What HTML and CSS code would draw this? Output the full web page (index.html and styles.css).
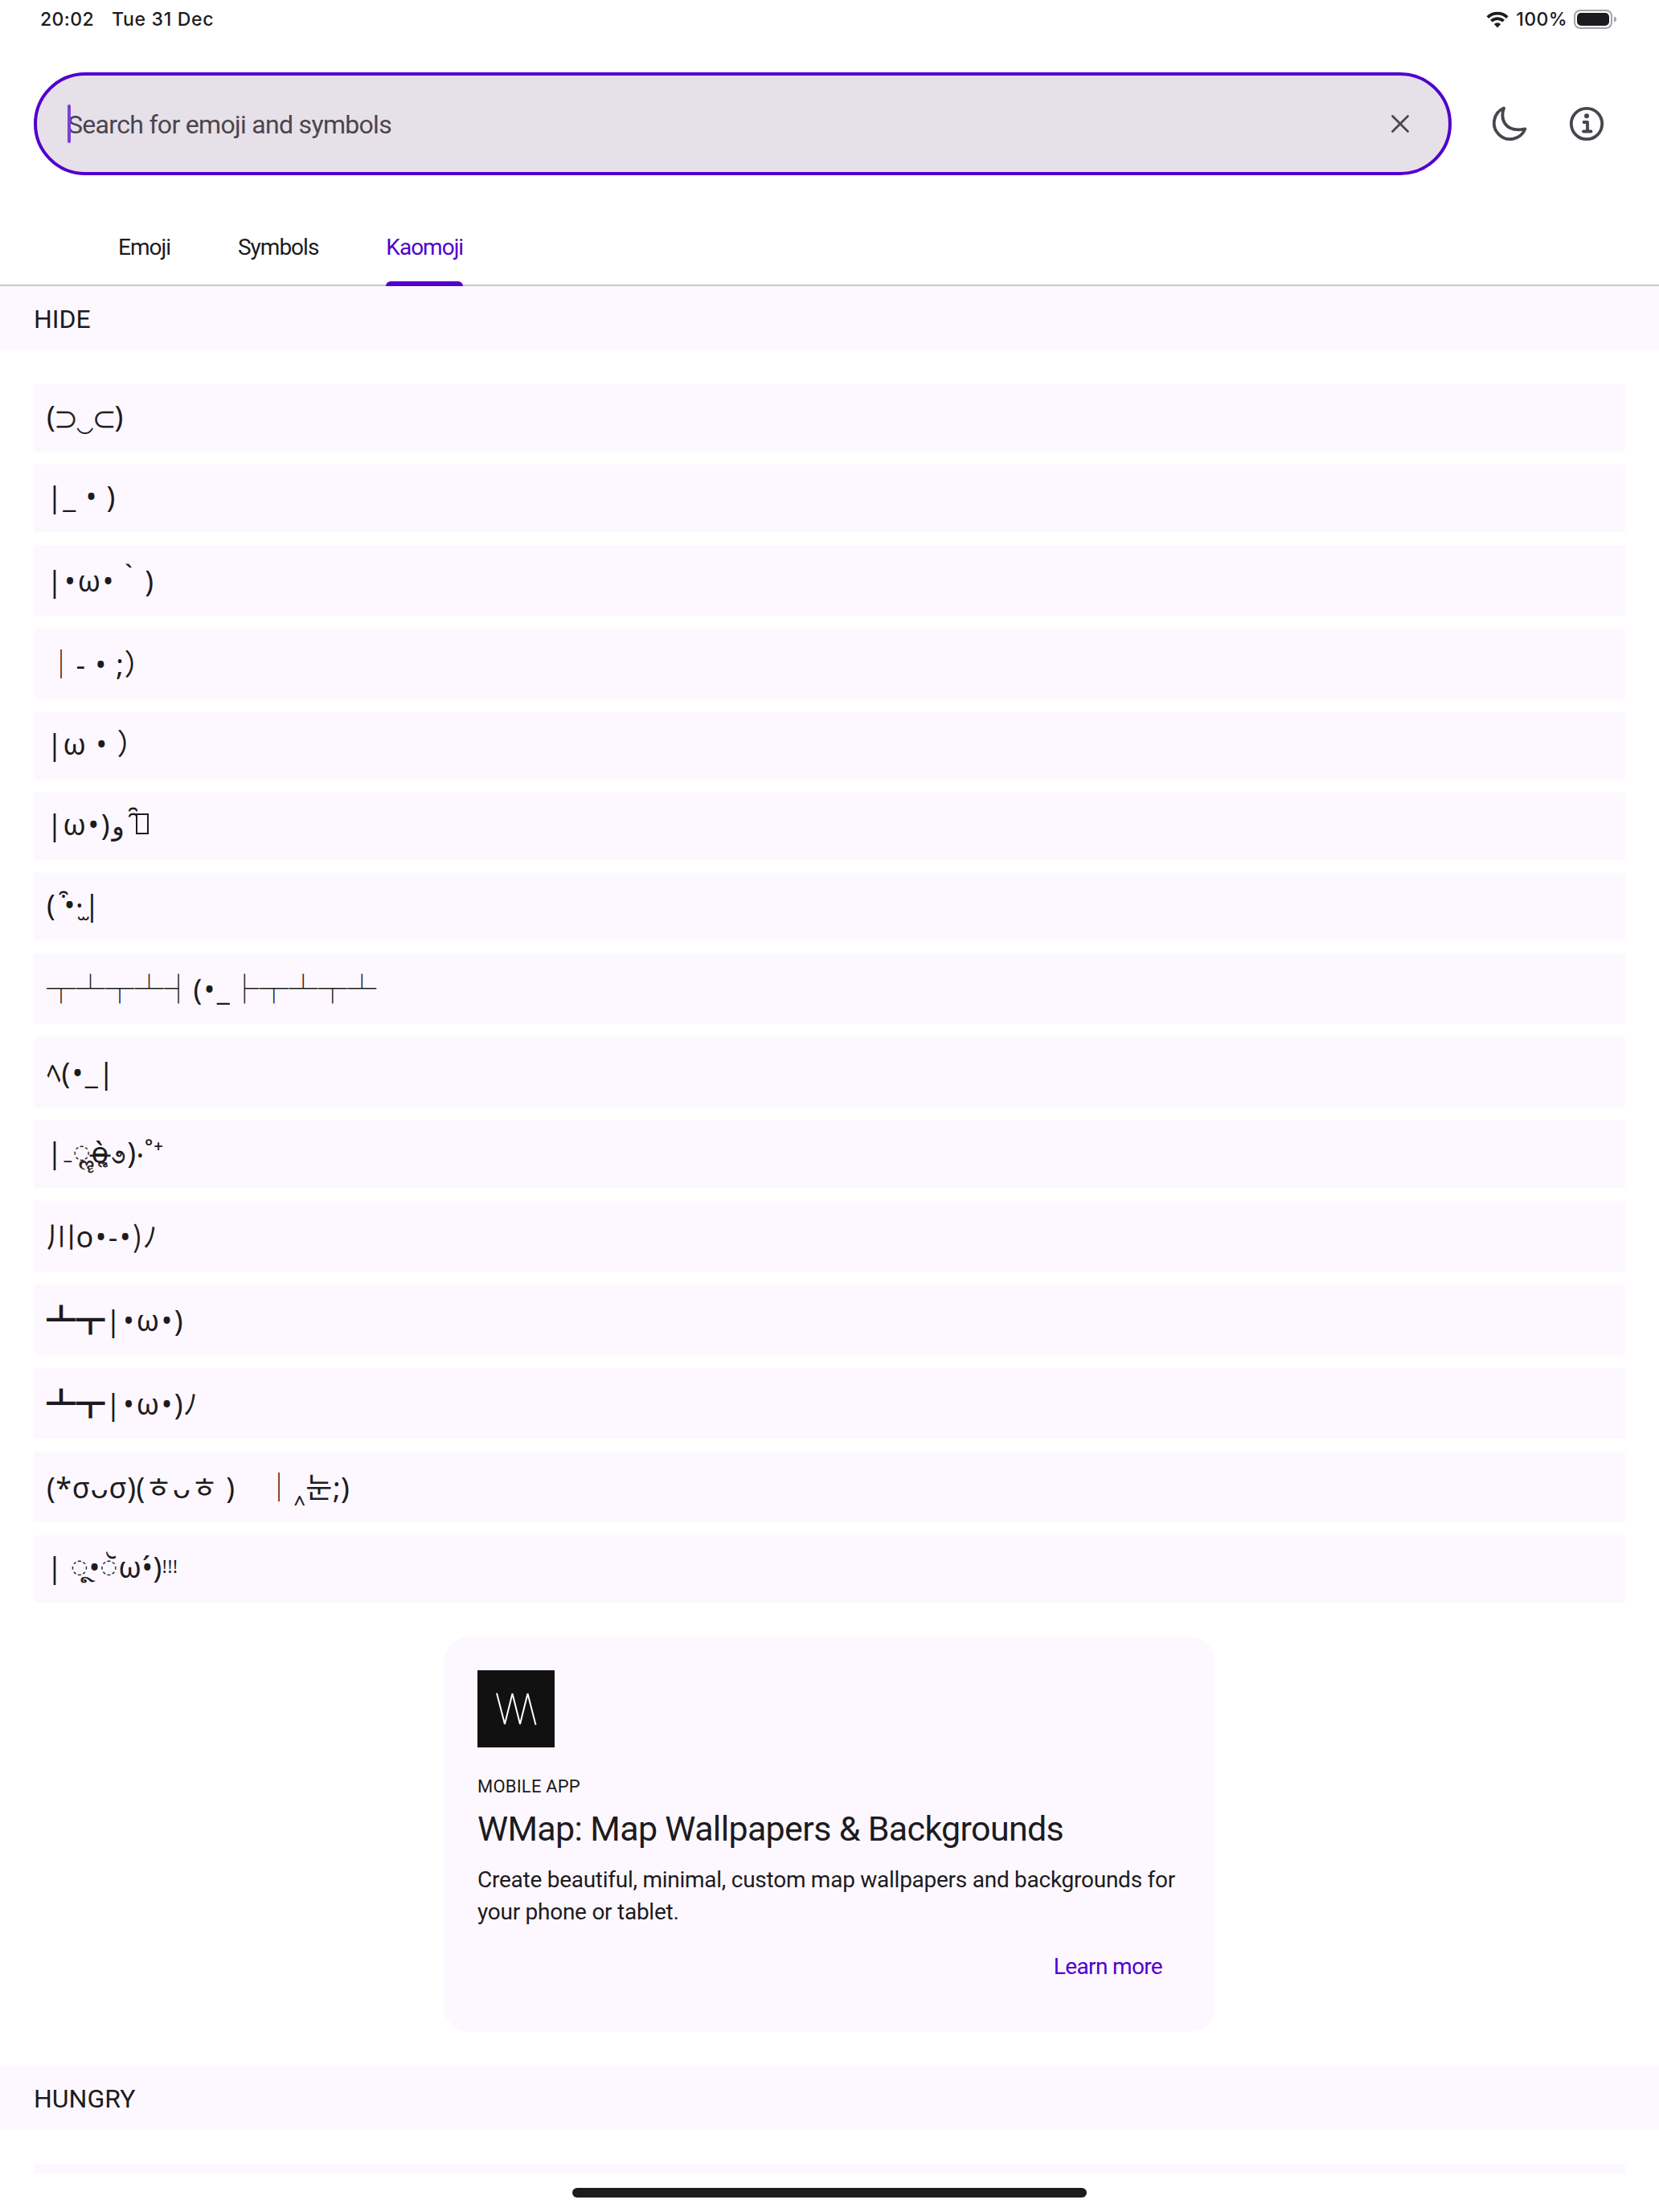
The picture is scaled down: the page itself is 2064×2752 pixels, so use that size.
FILE: index.html
```html
<!DOCTYPE html>
<html lang="en">
<head>
<meta charset="utf-8">
<title>Kaomoji</title>
<link rel="stylesheet" href="styles.css">
</head>
<body>
<header class="status">
  <div class="status-left"><span class="time">20:02</span><span class="date">Tue 31 Dec</span></div>
  <div class="status-right">
    <svg class="wifi" viewBox="0 0 28 21"><path d="M1.800 7.600a17.500 17.500 0 0 1 24.400 0M6.400 12.200a11 11 0 0 1 15.200 0" fill="none" stroke="currentColor" stroke-width="3.800"/><path d="M9.800 16a6.200 6.200 0 0 1 8.400 0L14 20.400z" fill="currentColor"/></svg>
    <span>100%</span>
    <svg class="battery" viewBox="0 0 54 24"><rect x="1" y="1" width="46" height="22" rx="7" fill="none" stroke="#a4a3a6" stroke-width="2"/><rect x="4" y="4" width="40" height="16" rx="5" fill="currentColor"/><path d="M50 8.500q3 1 3 3.500t-3 3.500z" fill="#a4a3a6"/></svg>
  </div>
</header>
<div class="toolbar">
  <div class="search"><span class="caret"></span><span class="placeholder">Search for emoji and symbols</span>
    <svg class="clear" viewBox="0 0 24 24"><path d="M2.500 2.500l19 19M21.500 2.500l-19 19"/></svg>
  </div>
  <svg class="icon" viewBox="0 0 44 44"><path d="M15 2.600A20 20 0 1 0 41.400 28.400Q24 32 16.500 22Q11 14 15 2.600z"/></svg>
  <svg class="icon" viewBox="0 0 44 44"><circle cx="22" cy="22" r="19.200"/><path d="M18.500 20h4.500v11.500M18 31.500h9.500"/><circle class="dot" cx="22" cy="12.300" r="3"/></svg>
</div>
<nav class="tabs"><span class="tab">Emoji</span><span class="tab">Symbols</span><span class="tab active">Kaomoji</span></nav>
<h2 class="section">HIDE</h2>
<ul class="list">
  <li class="row">(<i class="set">⊃</i>‿<i class="set">⊂</i>)</li>
  <li class="row">|_ <b>•</b> )</li>
  <li class="row tall">|<b>•</b>ω<b>•</b>｀)</li>
  <li class="row tall">│- <b>•</b> ;）</li>
  <li class="row">|ω <b>•</b> ）</li>
  <li class="row">|ω<b>•</b>)<i class="waw">و</i><i class="arcs"> ̑̑</i><i class="box"></i></li>
  <li class="row loose">( ͒•·̫|</li>
  <li class="row tall">┬┴┬┴┤(<b>•</b>_├┬┴┬┴</li>
  <li class="row tall">ﾍ(<b>•</b>_|</li>
  <li class="row">|₋<i class="ring">◌</i><i class="mark mark-a">&nbsp;ૣ</i>ө̶̀<i class="mark mark-b">&nbsp;ૢ</i><i class="seven">૭</i>)‧˚⁺</li>
  <li class="row tall">川o<b>•</b>-<b>•</b><i class="wide">)</i>ﾉ</li>
  <li class="row tall">┻┳|<b>•</b>ω<b>•</b>)</li>
  <li class="row tall">┻┳|<b>•</b>ω<b>•</b>)ﾉ</li>
  <li class="row tall">(*σᴗσ)(ㅎᴗㅎ )　│‸눈;)</li>
  <li class="row">| <i class="ring">◌</i><i class="mark mark-d">&nbsp;ૂ</i>•<i class="ring">◌</i><i class="mark mark-c">&nbsp;ૅ</i>ω•́)<i class="sup">!!!</i></li>
</ul>
<article class="card">
  <svg class="logo" viewBox="0 0 96 96"><rect width="96" height="96" fill="#111"/><path d="M24 28.500L34 67L43.500 29L53 67L62.500 29L72.500 68" fill="none" stroke="#fff" stroke-width="2"/></svg>
  <div class="eyebrow">MOBILE APP</div>
  <h3 class="title">WMap: Map Wallpapers &amp; Backgrounds</h3>
  <p class="desc">Create beautiful, minimal, custom map wallpapers and backgrounds for<br>your phone or tablet.</p>
  <a class="more">Learn more</a>
</article>
<h2 class="section">HUNGRY</h2>
<div class="peek"></div>
<div class="home"></div>
</body>
</html>
```
FILE: styles.css
```css
* { box-sizing: border-box; margin: 0; padding: 0; }
body { width: 2064px; height: 2752px; overflow: hidden; background: #fff; color: #1d1b20; font-family: Roboto, "Noto Sans", sans-serif; }

/* status bar */
.status { height: 48px; display: flex; justify-content: space-between; align-items: center; padding: 0 52px 0 50px; font: 500 23px/48px Inter, sans-serif; letter-spacing: .4px; }
.status-left, .status-right { display: flex; align-items: center; }
.time { margin-right: 22px; }
.date { letter-spacing: .7px; }
.wifi { width: 28px; height: 21px; margin-right: 9px; }
.battery { width: 54px; height: 24px; margin-left: 8px; }

/* search and actions */
.toolbar { margin-top: 42px; height: 128px; padding: 0 68px 0 42px; display: flex; align-items: center; }
.search { width: 1764px; height: 128px; border: 4px solid #5200cc; border-radius: 64px; background: #e6e0e9; display: flex; align-items: center; padding: 2px 48px 0 38px; font-size: 32px; color: #49454f; margin-right: 50px; position: relative; }
.placeholder { letter-spacing: -.69px; }
.caret { position: absolute; left: 38px; top: 36px; width: 4px; height: 48px; border-radius: 2px; background: #7d40d8; }
.clear { width: 24px; height: 24px; margin: -2px 0 0 auto; stroke: #49454f; stroke-width: 2.8; stroke-linecap: round; }
.icon { width: 44px; height: 44px; fill: none; stroke: #49454f; stroke-width: 3.8; stroke-linecap: round; stroke-linejoin: round; }
.icon + .icon { margin-left: 52px; }
.dot { fill: #49454f; stroke: none; }

/* tabs */
.tabs { margin-top: 44px; height: 94px; border-bottom: 2px solid #cac4d0; display: flex; padding-left: 147px; gap: 84px; font-size: 28px; line-height: 92px; letter-spacing: -1px; }
.tab { height: 94px; }
.active { color: #5200cc; position: relative; }
.active::after { content: ""; position: absolute; left: 0; right: 0; bottom: 0; height: 6px; border-radius: 6px 6px 0 0; background: #5200cc; }

/* kaomoji list */
.section { height: 80px; background: #fdf8ff; padding: 2px 42px 0; font-size: 32px; line-height: 78px; font-weight: 400; }
.list { list-style: none; padding: 42px; display: grid; gap: 16px; }
.row { height: 84px; padding-left: 16px; background: #fdf8ff; font: 36px/80px "Noto Sans", "Noto Sans CJK SC", "Noto Sans CJK KR", "DejaVu Sans", sans-serif; letter-spacing: .5px; white-space: pre; overflow: hidden; }
.row i { font-style: normal; line-height: 1; }
.row b { font-weight: 400; margin: 0 2px; }
.tall { height: 88px; line-height: 90px; }
.loose { letter-spacing: .8px; }
.set { font-size: 30px; margin: 0 -2.3px; letter-spacing: 0; position: relative; top: 2px; -webkit-text-stroke: .4px currentColor; }
.waw { font-family: "DejaVu Sans"; font-size: 31px; margin-left: 2.5px; -webkit-text-stroke: .4px currentColor; }
.arcs { margin-left: 11px; }
.box { display: inline-block; width: 16px; height: 26px; border: 2px solid currentColor; margin-left: -6px; vertical-align: 1px; }
.wide { font-family: "Noto Sans CJK JP"; }
.ring { display: inline-block; width: 22.5px; font-family: "DejaVu Sans"; font-size: 24px; position: relative; top: -6px; }
.mark { display: inline-block; width: 0; position: relative; -webkit-text-stroke: .7px currentColor; }
.mark-a { font-size: 46px; left: -9.5px; top: -2px; }
.mark-b { font-size: 24px; left: -9px; top: -1px; }
.mark-c { font-size: 36px; left: -10px; top: -1px; }
.mark-d { font-size: 30px; left: -7px; top: -1px; }
.seven { font-size: 24px; margin: 0 2px 0 3px; -webkit-text-stroke: .9px currentColor; }
.sup { font-size: 22px; letter-spacing: .7px; position: relative; top: -6.5px; }

/* promo card */
.card { width: 960px; height: 492px; margin: 0 auto 42px; border-radius: 32px; background: #fdf8ff; padding: 42px; }
.logo { display: block; width: 96px; height: 96px; }
.eyebrow { margin-top: 34px; font-size: 22px; line-height: 30px; letter-spacing: .2px; }
.title { margin-top: 9px; font-size: 43px; line-height: 56px; font-weight: 400; letter-spacing: -.67px; }
.desc { margin-top: 16px; font-size: 28px; line-height: 40px; white-space: nowrap; letter-spacing: -.26px; }
.more { display: block; margin: 28px 24px 0 0; text-align: right; color: #5200cc; font-size: 28px; line-height: 40px; letter-spacing: -.65px; }

.peek { height: 12px; margin: 42px 42px 18px; background: #fdf8ff; }
.home { width: 640px; height: 12px; margin: 0 auto; border-radius: 6px; background: #1d1b20; }
```
